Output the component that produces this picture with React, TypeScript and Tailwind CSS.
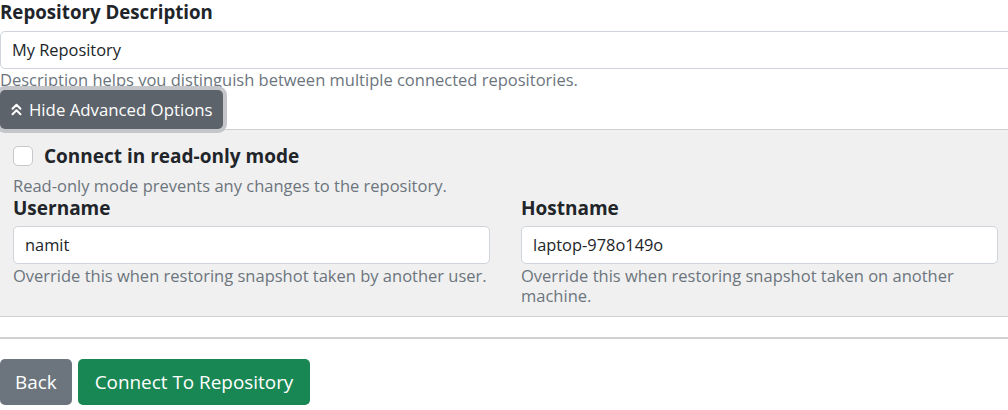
import { ChevronsUp } from "lucide-react";

export default function App() {
  return (
    <main className="w-[1008px] h-[410px] overflow-hidden bg-white text-[#212529] font-['Open_Sans',sans-serif]">
      <div>
        <label className="block text-[18.7px] leading-[24px] font-bold">
          Repository Description
        </label>
        <div className="mt-[7px] h-[38px] border border-[#ced4da] rounded-[5px] flex items-center px-[11px] text-[16.4px] bg-white -mr-[6px]">
          My Repository
        </div>
        <p className="text-[16.5px] leading-[21px] text-[#6c757d] h-[21px] whitespace-nowrap">
          Description helps you distinguish between multiple connected repositories.
        </p>
        <button
          type="button"
          className="relative z-10 flex items-center gap-[3px] h-[39px] pl-[7px] pr-[10px] rounded-[5px] bg-[#5c636a] text-white text-[16.8px] ring-4 ring-[#c4c6c9]"
        >
          <ChevronsUp className="w-[19px] h-[19px]" strokeWidth={2.6} />
          Hide Advanced Options
        </button>
      </div>

      <section className="bg-[#f0f0f0] border-y border-[#d0d0d0] pl-[13px] pr-[10px] pt-[14px] pb-[10px]">
        <label className="flex items-center gap-[11px]">
          <span className="w-[20px] h-[20px] rounded-[5px] border border-[#c4c8cc] bg-white" />
          <span className="text-[19px] font-bold leading-[24px]">Connect in read-only mode</span>
        </label>
        <p className="mt-[8px] text-[16.5px] leading-[20px] text-[#6c757d]">
          Read-only mode prevents any changes to the repository.
        </p>
        <div className="grid grid-cols-2 gap-[31px]">
          <div>
            <label className="block mt-[1px] text-[19px] leading-[23px] font-bold">Username</label>
            <div className="mt-[6px] h-[38px] border border-[#ced4da] rounded-[5px] bg-white flex items-center px-[11px] text-[16.4px]">
              namit
            </div>
            <p className="mt-[2px] text-[16.5px] leading-[20px] text-[#6c757d]">
              Override this when restoring snapshot taken by another user.
            </p>
          </div>
          <div>
            <label className="block mt-[1px] text-[19px] leading-[23px] font-bold">Hostname</label>
            <div className="mt-[6px] h-[38px] border border-[#ced4da] rounded-[5px] bg-white flex items-center px-[11px] text-[16.4px]">
              laptop-978o149o
            </div>
            <p className="mt-[2px] text-[16.5px] leading-[20px] text-[#6c757d]">
              Override this when restoring snapshot taken on another machine.
            </p>
          </div>
        </div>
      </section>

      <hr className="mt-[20px] border-t-2 border-[#d0d0d0]" />

      <div className="mt-[20px] flex gap-[6px]">
        <button type="button" className="h-[46px] px-[15px] rounded-[5px] bg-[#6c757d] text-white text-[18.9px]">
          Back
        </button>
        <button type="button" className="h-[46px] px-[17px] rounded-[5px] bg-[#198754] text-white text-[18.9px]">
          Connect To Repository
        </button>
      </div>
    </main>
  );
}
